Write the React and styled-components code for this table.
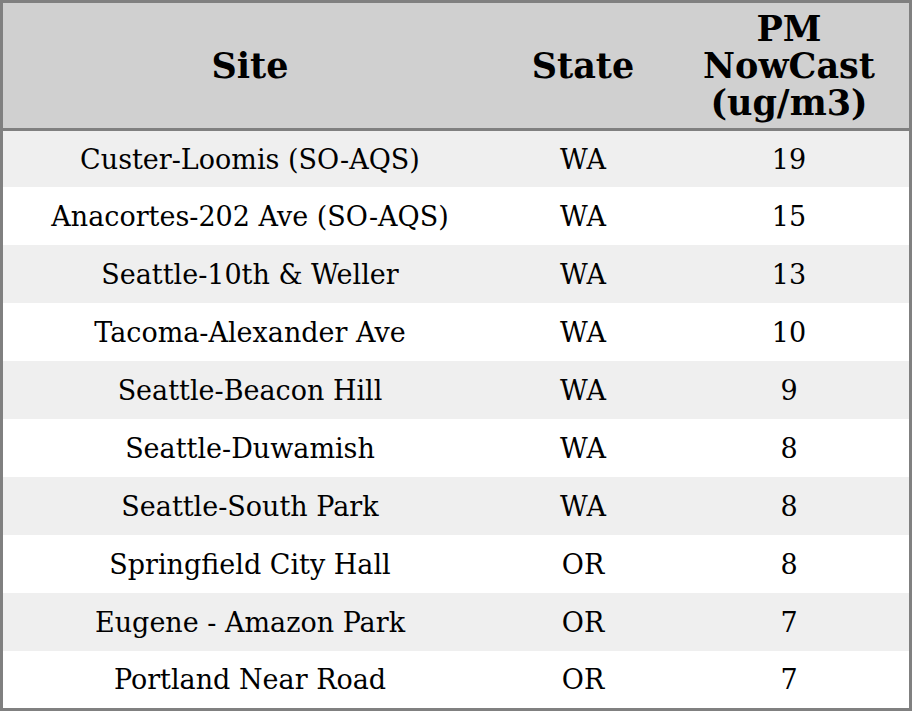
import React from 'react';
import styled, { createGlobalStyle } from 'styled-components';

const GlobalStyle = createGlobalStyle`
  html, body {
    margin: 0;
    padding: 0;
    background: #ffffff;
  }
  body {
    font-family: "DejaVu Serif", "Liberation Serif", serif;
    color: #000;
  }
`;

const Table = styled.div`
  box-sizing: border-box;
  width: 912px;
  height: 711px;
  border: 3px solid #808080;
  display: flex;
  flex-direction: column;
`;

const HeaderRow = styled.div`
  display: grid;
  grid-template-columns: 494px 172px 1fr;
  height: 125px;
  background: #d0d0d0;
  border-bottom: 3px solid #808080;
  flex: none;
`;

const HeadCell = styled.div`
  display: flex;
  align-items: center;
  justify-content: center;
  text-align: center;
  font-weight: bold;
  font-size: 35px;
  line-height: 37px;
`;

const Row = styled.div`
  display: grid;
  grid-template-columns: 494px 172px 1fr;
  height: ${({ $h }) => $h}px;
  flex: none;
  background: ${({ $odd }) => ($odd ? '#efefef' : '#ffffff')};
`;

const Cell = styled.div`
  display: flex;
  align-items: center;
  justify-content: center;
  font-size: 27px;
  white-space: nowrap;
`;

const sites = [
  ['Custer-Loomis (SO-AQS)', 'WA', 19],
  ['Anacortes-202 Ave (SO-AQS)', 'WA', 15],
  ['Seattle-10th & Weller', 'WA', 13],
  ['Tacoma-Alexander Ave', 'WA', 10],
  ['Seattle-Beacon Hill', 'WA', 9],
  ['Seattle-Duwamish', 'WA', 8],
  ['Seattle-South Park', 'WA', 8],
  ['Springfield City Hall', 'OR', 8],
  ['Eugene - Amazon Park', 'OR', 7],
  ['Portland Near Road', 'OR', 7],
];

export default function App() {
  return (
    <>
      <GlobalStyle />
      <Table>
        <HeaderRow>
          <HeadCell>Site</HeadCell>
          <HeadCell>State</HeadCell>
          <HeadCell>PM<br />NowCast<br />(ug/m3)</HeadCell>
        </HeaderRow>
        {sites.map(([name, state, pm], i) => (
          <Row
            key={name}
            $odd={i % 2 === 0}
            $h={i === 0 ? 56 : i === sites.length - 1 ? 57 : 58}
          >
            <Cell>{name}</Cell>
            <Cell>{state}</Cell>
            <Cell>{pm}</Cell>
          </Row>
        ))}
      </Table>
    </>
  );
}
